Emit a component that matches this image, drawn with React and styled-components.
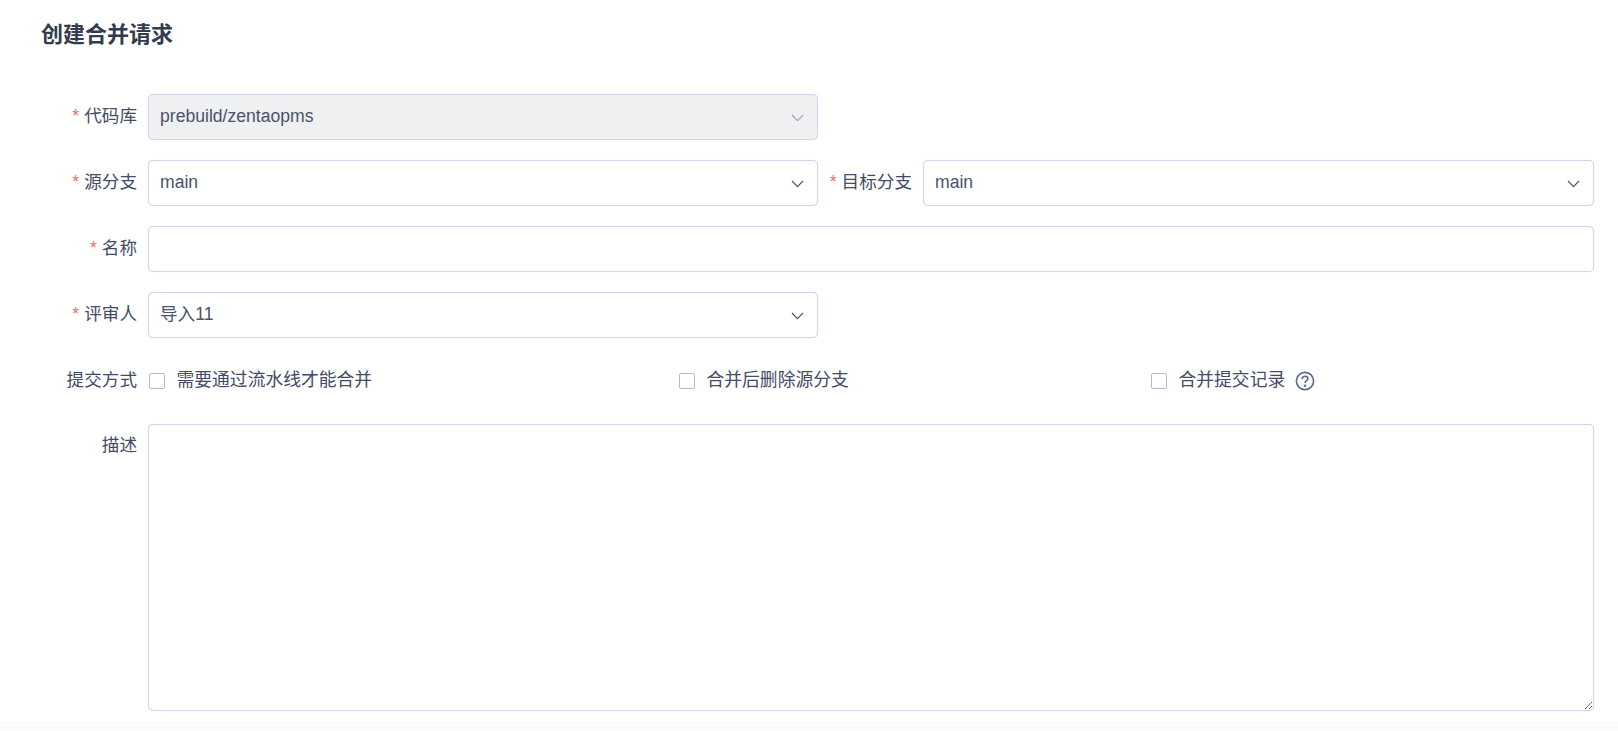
import React from "react";
import styled, { createGlobalStyle } from "styled-components";

const Global = createGlobalStyle`
  html, body { margin: 0; padding: 0; background: #fff; }
  body { font-family: "Liberation Sans", "Noto Sans CJK SC", sans-serif; color: #3d4660; overflow: hidden; }
  * { box-sizing: border-box; }
`;

const Page = styled.div`
  display: flex;
  flex-direction: column;
  height: 731px;
  background: #fff;
`;

const Main = styled.main`
  padding: 20px 24px 0 0;
`;

const Footer = styled.div`
  flex: 1;
  margin-top: 10px;
  background: #fbfbfb;
`;

const Title = styled.h1`
  margin: 0 0 44px 41px;
  font-size: 22px;
  line-height: 30px;
  font-weight: 700;
  color: #333b4f;
`;

const Form = styled.form`
  display: grid;
  grid-template-columns: 137px 670px 83px 1fr;
  column-gap: 11px;
  row-gap: 20px;
`;

const Label = styled.label`
  display: flex;
  justify-content: flex-end;
  align-items: ${(p) => (p.$top ? "flex-start" : "center")};
  height: 46px;
  padding-bottom: ${(p) => (p.$top ? "0" : "3px")};
  padding-top: ${(p) => (p.$top ? "8px" : "0")};
  font-size: 17.6px;
  line-height: 26px;
  white-space: nowrap;
  color: #434b66;
  &::before {
    content: ${(p) => (p.$required ? '"*"' : "none")};
    color: #f56c6c;
    margin-right: 5px;
  }
`;

const Control = styled.div`
  grid-column: ${(p) => p.$span || "auto"};
  display: flex;
  align-items: center;
  justify-content: space-between;
  height: 46px;
  padding: 0 11px 2px;
  border: 1px solid #d2d6e8;
  box-shadow: 0 0 1px #d2d6e8;
  border-radius: 5px;
  background: ${(p) => (p.$disabled ? "#eff0f2" : "#fff")};
  font-size: 17.6px;
  line-height: 26px;
  color: #4b5368;
`;

const Gap = styled.div`
  grid-column: span 2;
`;

const Chevron = styled.svg`
  width: 13px;
  height: 8px;
  flex: none;
  margin: 4px 2px 0 0;
  color: ${(p) => (p.$muted ? "#a3a7b0" : "#4b5368")};
`;

const ChecksRow = styled.div`
  grid-column: 2 / -1;
  display: grid;
  grid-template-columns: 530px 472px auto;
  align-items: center;
  height: 46px;
  padding-left: 1px;
`;

const Check = styled.label`
  display: flex;
  align-items: center;
  height: 26px;
  font-size: 17.8px;
  line-height: 26px;
  color: #434b66;
`;

const CheckText = styled.span`
  margin-top: -2px;
`;

const Box = styled.span`
  width: 16px;
  height: 16px;
  flex: none;
  margin-right: 11.5px;
  border: 1px solid #b4bac9;
  border-radius: 2px;
  background: #fff;
`;

const Help = styled.svg`
  width: 20px;
  height: 20px;
  margin-left: 10px;
  color: #5c6885;
`;

const TextArea = styled.textarea`
  grid-column: 2 / -1;
  display: block;
  width: 100%;
  height: 287px;
  padding: 8px 12px;
  border: 1px solid #d2d6e8;
  box-shadow: 0 0 1px #d2d6e8;
  border-radius: 5px;
  outline: none;
  resize: vertical;
  background: #fff;
  font: 17.6px "Liberation Sans", "Noto Sans CJK SC", sans-serif;
`;

const Arrow = ({ muted }) => (
  <Chevron $muted={muted} viewBox="0 0 13 8" fill="none" stroke="currentColor" strokeWidth="1.1">
    <path d="M1 1l5.5 5.7L12 1" />
  </Chevron>
);

const Select = ({ value, disabled, span }) => (
  <Control $disabled={disabled} $span={span}>
    <span>{value}</span>
    <Arrow muted={disabled} />
  </Control>
);

export default function App() {
  return (
    <Page>
      <Global />
      <Main>
        <Title>创建合并请求</Title>
        <Form>
          <Label $required>代码库</Label>
          <Select value="prebuild/zentaopms" disabled />
          <Gap />

          <Label $required>源分支</Label>
          <Select value="main" />
          <Label $required>目标分支</Label>
          <Select value="main" />

          <Label $required>名称</Label>
          <Control $span="2 / -1" />

          <Label $required>评审人</Label>
          <Select value="导入11" />
          <Gap />

          <Label>提交方式</Label>
          <ChecksRow>
            <Check><Box /><CheckText>需要通过流水线才能合并</CheckText></Check>
            <Check><Box /><CheckText>合并后删除源分支</CheckText></Check>
            <Check>
              <Box /><CheckText>合并提交记录</CheckText>
              <Help viewBox="0 0 20 20" fill="none" stroke="currentColor" strokeWidth="1.6">
                <circle cx="10" cy="10" r="8.6" />
                <path d="M7.2 8c0-1.7 1.3-2.8 2.9-2.8s2.8 1 2.8 2.4c0 2.2-2.9 2.3-2.9 4.4" />
                <circle cx="10" cy="14.7" r="0.5" fill="currentColor" />
              </Help>
            </Check>
          </ChecksRow>

          <Label $top as="div">描述</Label>
          <TextArea />
        </Form>
      </Main>
      <Footer />
    </Page>
  );
}
